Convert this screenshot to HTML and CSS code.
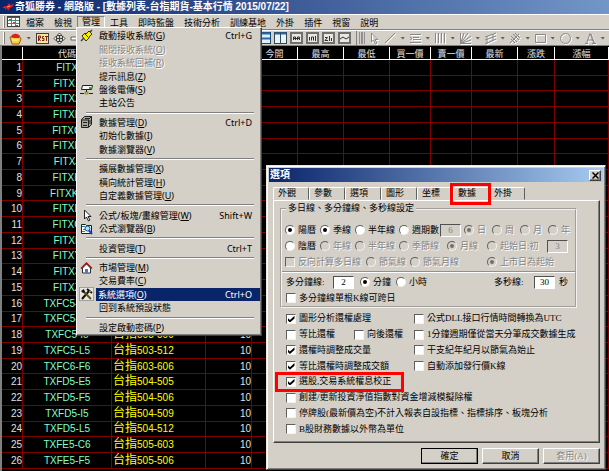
FILE: index.html
```html
<!DOCTYPE html>
<html lang="zh-Hant">
<head>
<meta charset="utf-8">
<title>奇狐勝券</title>
<link rel="stylesheet" href="styles.css">
</head>
<body>
<div class="app">
  <header class="titlebar">
    <svg class="logo" width="12" height="10" viewBox="0 0 12 10"><path d="M0 6 3 4 5 4 7 1 8 3 12 2 10 5 8 6 6 9 5 6 3 8 3 6Z" fill="#f01818"/><path d="M5 5 8 4" stroke="#ff9a80" fill="none"/></svg>
    <h1>奇狐勝券 - 網路版 - [數據列表-台指期貨-基本行情 2015/07/22]</h1>
  </header>

  <nav class="menubar">
    <span class="grip"></span>
    <svg class="doc" width="13" height="11" viewBox="0 0 13 11"><rect x=".5" y=".5" width="12" height="10" fill="#fff" stroke="#404040"/><path d="M1 1.500h11" stroke="#2858c8"/><path d="M1 4.500h11M1 7.500h11M4.500 2v8M8.500 2v8" stroke="#508878"/><path d="M2 3.500h2M6 6.500h2M9 9.500h2" stroke="#d04040"/></svg>
    <button>檔案</button><button>檢視</button>
    <div class="open">
      <button>管理</button>
      <div class="menu" role="menu">
        <button role="menuitem"><svg width="13" height="13" viewBox="0 0 13 13"><path d="M1 12l3-3M9 4l3-3" stroke="#404040" stroke-width="1.500"/><path d="M2 7l3-3 1 1 3-3 3 3-3 3 0 1-3 3Z" fill="#f8f000" stroke="#303000"/><path d="M5 5l3 3" stroke="#303000"/></svg><span>啟動接收系統(<u>G</u>)</span><kbd>Ctrl+G</kbd></button>
        <button role="menuitem" disabled><i></i><span>關閉接收系統(<u>O</u>)</span></button>
        <button role="menuitem" disabled><i></i><span>接收系統回補(<u>R</u>)</span></button>
        <button role="menuitem"><i></i><span>提示訊息(<u>Z</u>)</span></button>
        <button role="menuitem"><svg width="13" height="11" viewBox="0 0 13 11"><path d="M2.500 1.500h10l-1 4h-10z" fill="#f8f8f8" stroke="#202020"/><path d="M6.500 6v3M0 9.500h4M9 9.500h4" stroke="#202020"/><rect x="5" y="8" width="3" height="2" fill="#e0e020" stroke="#404000" stroke-width=".5"/><rect x="9" y="3" width="2" height="2" fill="#20b020"/></svg><span>盤後電傳(<u>S</u>)</span></button>
        <button role="menuitem"><i></i><span>主站公告</span></button>
        <hr>
        <button role="menuitem"><svg width="13" height="12" viewBox="0 0 13 12"><path d="M1.500 3.500l3-3h7v8l-3 3h-7z" fill="#a8a498" stroke="#202020"/><path d="M1 4h7.500v7M8.500 3.500l3-3M3 6.500h4M3 9.500h4M5 2.500h5M10 4v4" stroke="#202020" fill="none"/></svg><span>數據管理(<u>D</u>)</span><kbd>Ctrl+D</kbd></button>
        <button role="menuitem"><i></i><span>初始化數據(<u>I</u>)</span></button>
        <button role="menuitem"><i></i><span>數據瀏覽器(<u>V</u>)</span></button>
        <hr>
        <button role="menuitem"><i></i><span>擴展數據管理(<u>X</u>)</span></button>
        <button role="menuitem"><i></i><span>橫向統計管理(<u>H</u>)</span></button>
        <button role="menuitem"><i></i><span>自定義數據管理(<u>U</u>)</span></button>
        <hr>
        <button role="menuitem"><svg width="13" height="13" viewBox="0 0 13 13"><path d="M4.500 1v9l2-2 2 4 1.500-1-2-3.500h3z" fill="#fff" stroke="#202020"/></svg><span>公式/板塊/畫線管理(<u>W</u>)</span><kbd>Shift+W</kbd></button>
        <button role="menuitem"><svg width="13" height="12" viewBox="0 0 13 12"><path d="M1.500 1.500h4l1 1h5v8h-10z" fill="#fff" stroke="#202020"/><path d="M2 3.500h3M3 6.500h2M2 8.500h3" stroke="#209090"/><circle cx="7.500" cy="5.500" r="2.500" fill="#a8e8f0" stroke="#184888"/><path d="M9 7.500l3 3.500" stroke="#1838e0" stroke-width="2"/></svg><span>公式瀏覽器(<u>B</u>)</span></button>
        <hr>
        <button role="menuitem"><i></i><span>投資管理(<u>T</u>)</span><kbd>Ctrl+T</kbd></button>
        <hr>
        <button role="menuitem"><svg width="13" height="12" viewBox="0 0 13 12"><path d="M2.500 6v5h8V6l-4-4z" fill="#fff" stroke="#303030"/><path d="M1 6.500l5.500-5.500 5.500 5.500" fill="none" stroke="#a01818" stroke-width="1.500"/><rect x="5" y="7" width="3" height="4" fill="#4878d0"/></svg><span>市場管理(<u>M</u>)</span></button>
        <button role="menuitem"><i></i><span>交易費率(<u>C</u>)</span></button>
        <button role="menuitem" class="current"><svg width="13" height="12" viewBox="0 0 13 12"><path d="M2 11l7-8M7 1l5 4" stroke="#101010" stroke-width="2"/><path d="M3 3l8 8" stroke="#605010" stroke-width="2"/><path d="M1 3l3-2 1 3-2 1z" fill="#101010"/><path d="M9 3l2 1" stroke="#d0b020"/></svg><span>系統選項(<u>O</u>)</span><kbd>Ctrl+O</kbd></button>
        <button role="menuitem"><i></i><span>回到系統預設狀態</span></button>
        <hr>
        <button role="menuitem"><i></i><span>設定啟動密碼(<u>P</u>)</span></button>
      </div>
    </div>
    <button>工具</button><button>即時監盤</button><button>技術分析</button><button>訓練基地</button><button>外掛</button><button>插件</button><button>視窗</button><button>說明</button>
  </nav>

  <div class="toolbar">
    <div class="tools main">
      <span class="grip"></span>
      <svg width="13" height="13" viewBox="0 0 13 13"><path d="M1 5h10l1 2-2 5H3z" fill="#f8d040" stroke="#a06000"/><path d="M2 5c0-3 6-5 9-1l-1 2H5z" fill="#e02020"/><path d="M3 8h6" stroke="#fff8c0"/></svg>
      <span class="caret"></span>
      <svg width="13" height="11" viewBox="0 0 13 11"><rect x=".5" y=".5" width="12" height="10" fill="#f0e8a0" stroke="#404040"/><path d="M2.500 8V3h2v2h-2l2 3M8 3.500H6.500v2H8v2H6M9 3.500h3M10.500 3v5" fill="none" stroke="#802010"/></svg>
      <svg width="13" height="13" viewBox="0 0 13 13"><path d="M6.500 1L9 3.500H4zM6.500 12L9 9.500H4zM1 6.500L3.500 4v5zM12 6.500L9.500 4v5zM6.500 3v7M3 6.500h7" fill="#fff" stroke="#404040"/></svg>
      <svg width="13" height="13" viewBox="0 0 13 13"><path d="M1 5h11v3H1z" fill="#fff" stroke="#606060"/></svg>
    </div>
    <div class="tools windows">
      <svg width="13" height="12" viewBox="0 0 13 12"><rect x=".5" y=".5" width="12" height="11" fill="#e0f0f8" stroke="#184878"/><path d="M1 1.500h11M1 6.500h11" stroke="#2868a8" stroke-width="2"/></svg>
      <svg width="13" height="12" viewBox="0 0 13 12"><rect x=".5" y=".5" width="12" height="11" fill="#e8f4f8" stroke="#304858"/><path d="M1 1.500h11" stroke="#2868a8" stroke-width="2"/><path d="M6.500 1v10" stroke="#304858"/></svg>
      <svg width="13" height="12" viewBox="0 0 13 12"><rect x="1" y="1" width="11" height="10" fill="#e8e8e0" stroke="#707070" stroke-width="2"/><path d="M3.500 8V5h2v3M7.500 8V5h2v3M4 6.500h6" fill="none" stroke="#303030"/></svg>
      <svg width="13" height="12" viewBox="0 0 13 12"><rect x="1" y="1" width="11" height="10" fill="#e8e8e0" stroke="#707070" stroke-width="2"/><path d="M3.500 8.500V5M5.500 8.500V5h2v3.500M9.500 4v5" fill="none" stroke="#303030"/></svg>
      <svg width="13" height="12" viewBox="0 0 13 12"><rect x="1" y="1" width="11" height="10" fill="#e8e8e0" stroke="#707070" stroke-width="2"/><path d="M3 5.500h2.500L3 8.500h3M7.500 9V4M9.500 9V6" fill="none" stroke="#303030"/></svg>
      <svg width="13" height="12" viewBox="0 0 13 12"><rect x="1" y="1" width="11" height="10" fill="#e8e8e0" stroke="#707070" stroke-width="2"/><path d="M2 7l3-2 3 2 3-2" fill="none" stroke="#303030"/></svg>
    </div>
    <div class="tools draw">
      <span class="grip double"></span>
      <svg width="13" height="13" viewBox="0 0 13 13"><path d="M3.500 1v9l2-2 2 4 1.500-1-2-3.500h3z"/></svg>
      <svg width="13" height="13" viewBox="0 0 13 13"><path d="M1 11L11 1"/></svg><span class="caret"></span>
      <svg width="13" height="13" viewBox="0 0 13 13"><path d="M1 2.500h11M1 10.500h11M4 5.500h6M4 7.500h8M1 5l2 1.500L1 8"/></svg><span class="caret"></span>
      <svg width="13" height="13" viewBox="0 0 13 13"><path d="M1.500 1v10M4.500 1v10M7.500 1v10M10.500 1v10"/></svg><span class="caret"></span>
      <svg width="13" height="13" viewBox="0 0 13 13"><path d="M1.500 1v10.500H12M1.500 11.500L5 1M1.500 11.500L9 1M1.500 11.500L12 4M1.500 11.500L12 8"/></svg><span class="caret"></span>
      <svg width="13" height="13" viewBox="0 0 13 13"><path d="M1 5l11-4M1 8l11-4M1 12l11-5M3 4v8M9 2v7"/></svg><span class="caret"></span>
      <svg width="13" height="13" viewBox="0 0 13 13"><path d="M1 11l9-9M2 4l6 6M4 2l6 6M6 1l5 5M2 7l4 4"/></svg><span class="caret"></span>
      <svg width="13" height="13" viewBox="0 0 13 13"><path d="M1.500 2.500h10v8h-10z"/></svg><span class="caret"></span>
      <svg width="13" height="13" viewBox="0 0 13 13"><circle cx="6.500" cy="6.500" r="5"/></svg><span class="caret"></span>
      <svg width="13" height="13" viewBox="0 0 13 13"><path d="M2.500 11.500L6 1.500 10 11.500M4 8h5M1 11.500h3M8 11.500h4M7 2l3.500 9"/></svg><span class="caret"></span>
      <svg width="13" height="13" viewBox="0 0 13 13"><path d="M1.500 1.500h9v9h-9zM4 4l4 4M4 8l4-4"/></svg>
    </div>
  </div>

  <main class="quotes">
    <table>
      <colgroup><col class="c-no"><col class="c-code"><col class="c-name"><col class="c-m"><col class="c-m"><col class="c-m"><col class="c-m"><col class="c-s"><col class="c-s"><col class="c-m"><col class="c-xs"><col></colgroup>
      <thead><tr><th></th><th>代碼</th><th></th><th></th><th>今開</th><th>最高</th><th>最低</th><th>買一價</th><th>賣一價</th><th>最新</th><th>漲跌</th><th>漲幅</th></tr></thead>
      <tbody>
        <tr><td>1</td><td>FITX</td><td></td><td></td><td></td><td></td><td></td><td></td><td></td><td></td><td></td><td></td></tr>
        <tr><td>2</td><td>FITX1</td><td></td><td></td><td></td><td></td><td></td><td></td><td></td><td></td><td></td><td></td></tr>
        <tr><td>3</td><td>FITX2</td><td></td><td></td><td></td><td></td><td></td><td></td><td></td><td></td><td></td><td></td></tr>
        <tr><td>4</td><td>FITXF</td><td></td><td></td><td></td><td></td><td></td><td></td><td></td><td></td><td></td><td></td></tr>
        <tr><td>5</td><td>FITXG</td><td></td><td></td><td></td><td></td><td></td><td></td><td></td><td></td><td></td><td></td></tr>
        <tr><td>6</td><td>FITXE</td><td></td><td></td><td></td><td></td><td></td><td></td><td></td><td></td><td></td><td></td></tr>
        <tr><td>7</td><td>FITXJ</td><td></td><td></td><td></td><td></td><td></td><td></td><td></td><td></td><td></td><td></td></tr>
        <tr><td>8</td><td>FITXH</td><td></td><td></td><td></td><td></td><td></td><td></td><td></td><td></td><td></td><td></td></tr>
        <tr><td>9</td><td>FITXK1</td><td></td><td></td><td></td><td></td><td></td><td></td><td></td><td></td><td></td><td></td></tr>
        <tr><td>10</td><td>FITXB</td><td></td><td></td><td></td><td></td><td></td><td></td><td></td><td></td><td></td><td></td></tr>
        <tr><td>11</td><td>FITXC</td><td></td><td></td><td></td><td></td><td></td><td></td><td></td><td></td><td></td><td></td></tr>
        <tr><td>12</td><td>FITXL</td><td></td><td></td><td></td><td></td><td></td><td></td><td></td><td></td><td></td><td></td></tr>
        <tr><td>13</td><td>FITXY</td><td></td><td></td><td></td><td></td><td></td><td></td><td></td><td></td><td></td><td></td></tr>
        <tr><td>14</td><td>FITX3</td><td></td><td></td><td></td><td></td><td></td><td></td><td></td><td></td><td></td><td></td></tr>
        <tr><td>15</td><td>FITXZ</td><td></td><td></td><td></td><td></td><td></td><td></td><td></td><td></td><td></td><td></td></tr>
        <tr><td>16</td><td>TXFC5-E5</td><td></td><td></td><td></td><td></td><td></td><td></td><td></td><td></td><td></td><td></td></tr>
        <tr><td>17</td><td>TXFC5-F5</td><td></td><td></td><td></td><td></td><td></td><td></td><td></td><td></td><td></td><td></td></tr>
        <tr><td>18</td><td>TXFC5-I5</td><td>台指<span>503-509</span></td><td>10</td><td></td><td></td><td></td><td></td><td></td><td></td><td></td><td></td></tr>
        <tr><td>19</td><td>TXFC5-L5</td><td>台指<span>503-512</span></td><td>10</td><td></td><td></td><td></td><td></td><td></td><td></td><td></td><td></td></tr>
        <tr><td>20</td><td>TXFC6-F6</td><td>台指<span>603-606</span></td><td>10</td><td></td><td></td><td></td><td></td><td></td><td></td><td></td><td></td></tr>
        <tr><td>21</td><td>TXFD5-E5</td><td>台指<span>504-505</span></td><td>10</td><td></td><td></td><td></td><td></td><td></td><td></td><td></td><td></td></tr>
        <tr><td>22</td><td>TXFD5-F5</td><td>台指<span>504-506</span></td><td>10</td><td></td><td></td><td></td><td></td><td></td><td></td><td></td><td></td></tr>
        <tr><td>23</td><td>TXFD5-I5</td><td>台指<span>504-509</span></td><td>10</td><td></td><td></td><td></td><td></td><td></td><td></td><td></td><td></td></tr>
        <tr><td>24</td><td>TXFD5-L5</td><td>台指<span>504-512</span></td><td>10</td><td></td><td></td><td></td><td></td><td></td><td></td><td></td><td></td></tr>
        <tr><td>25</td><td>TXFE5-C6</td><td>台指<span>505-603</span></td><td>10</td><td></td><td></td><td></td><td></td><td></td><td></td><td></td><td></td></tr>
        <tr><td>26</td><td>TXFE5-F5</td><td>台指<span>505-506</span></td><td>10</td><td></td><td></td><td></td><td></td><td></td><td></td><td></td><td></td></tr>
      </tbody>
    </table>
  </main>

  <section class="dialog" role="dialog" aria-labelledby="dlg-title">
    <header class="dialog-title">
      <h2 id="dlg-title">選項</h2>
      <button class="close" aria-label="關閉"><svg width="7" height="7" viewBox="0 0 7 7"><path d="M.5.5l6 6M6.500.5l-6 6" stroke="#000" stroke-width="1.500"/></svg></button>
    </header>
    <div class="tabs" role="tablist">
      <button role="tab">外觀</button><button role="tab">參數</button><button role="tab">選項</button><button role="tab">圖形</button><button role="tab">坐標</button><button role="tab" class="selected" aria-selected="true">數據</button><button role="tab">外掛</button>
    </div>
    <div class="panel">
      <fieldset>
        <legend>多日線、多分鐘線、多秒線設定</legend>
        <div class="row days">
          <label><input type="radio" name="cal" checked>陽曆</label>
          <label><input type="radio" name="sun" checked>季線</label>
          <label><input type="radio" name="half">半年線</label>
          <label><input type="radio" name="half">週期數</label>
          <input type="text" value="6" aria-label="週期數" disabled>
          <label class="off"><input type="radio" name="unit" checked disabled>日</label>
          <label class="off"><input type="radio" name="unit" disabled>周</label>
          <label class="off"><input type="radio" name="unit" disabled>月</label>
          <label class="off"><input type="radio" name="unit" disabled>年</label>
        </div>
        <div class="row moon">
          <label><input type="radio" name="cal">陰曆</label>
          <label class="off"><input type="radio" name="lunar" disabled>年線</label>
          <label class="off"><input type="radio" name="lunar" disabled>半年線</label>
          <label class="off"><input type="radio" name="lunar" disabled>季節線</label>
          <label class="off"><input type="radio" name="lunar" checked disabled>月線</label>
          <label class="off"><input type="radio" name="start" disabled>起始日:初</label>
          <input type="text" value="3" aria-label="起始日" disabled>
        </div>
        <div class="row terms">
          <label class="off"><input type="checkbox" disabled>反向計算多日線</label>
          <label class="off"><input type="radio" name="lunar" disabled>節氣線</label>
          <label class="off"><input type="radio" name="lunar" disabled>節氣月線</label>
          <label class="off"><input type="radio" name="start" checked disabled>上市日為起始</label>
        </div>
        <hr>
        <div class="row minutes">
          <label for="mins">多分鐘線:</label>
          <input type="text" id="mins" value="2">
          <label><input type="radio" name="min" checked>分鐘</label>
          <label><input type="radio" name="min">小時</label>
          <label for="secs">多秒線:</label>
          <input type="text" id="secs" value="30">
          <span>秒</span>
        </div>
        <div class="row single"><label><input type="checkbox">多分鐘線單根K線可跨日</label></div>
      </fieldset>
      <div class="options">
        <label><input type="checkbox" checked>圖形分析還權處理</label>
        <label class="right"><input type="checkbox">公式DLL接口行情時間轉換為UTC</label>
        <label class="half"><input type="checkbox">等比還權</label>
        <label class="half"><input type="checkbox">向後還權</label>
        <label class="right"><input type="checkbox">1分鐘週期僅從當天分筆成交數據生成</label>
        <label><input type="checkbox" checked>還權時調整成交量</label>
        <label class="right"><input type="checkbox">干支紀年紀月以節氣為始止</label>
        <label><input type="checkbox" checked>等比還權時調整成交額</label>
        <label class="right"><input type="checkbox">自動添加發行價K線</label>
        <label class="marked"><input type="checkbox" checked>選股,交易系統權息校正</label>
        <label class="wide"><input type="checkbox">創建/更新投資淨值指數對資金增減模擬除權</label>
        <label class="wide"><input type="checkbox">停牌股(最新價為空)不計入報表自設指標、指標排序、板塊分析</label>
        <label class="wide"><input type="checkbox">B股財務數據以外幣為單位</label>
      </div>
    </div>
    <footer class="actions">
      <button class="default">確定</button><button>取消</button><button disabled>套用(A)</button>
    </footer>
  </section>
</div>
</body>
</html>
```
FILE: styles.css
```css
* { box-sizing: border-box; }

body {
  margin: 0;
  background: #d4d0c8;
  color: #000;
  font: 9px/11px "Noto Sans", "Noto Sans CJK TC", sans-serif;
}

button, input {
  font: inherit;
  color: inherit;
  margin: 0;
  padding: 0;
}

button { border: 0; background: none; white-space: nowrap; }

.app {
  position: relative;
  display: flex;
  flex-direction: column;
  height: 100vh;
  overflow: hidden;
}

.titlebar {
  display: flex;
  align-items: center;
  gap: 1px;
  height: 14px;
  padding-left: 2px;
  background: linear-gradient(90deg, #0a246a, #7396c8);
}

h1, h2 {
  margin: 0;
  color: #fff;
  font: bold 10px/12px "Liberation Sans", "Noto Sans CJK TC", sans-serif;
  white-space: nowrap;
}

/* Menu bar */
.menubar {
  display: flex;
  height: 16px;
  padding: 1px 0 0 3px;
  border-top: 1px solid #fff;
  border-bottom: 1px solid #808080;
}

.menubar > button, .open > button { height: 12px; padding: 0 5px; }
.menubar .doc { margin: 0 1px 0 2px; }

.grip {
  flex: none;
  width: 2px;
  height: 12px;
  border-left: 1px solid #fff;
  border-right: 1px solid #808080;
}
.grip.double { width: 6px; border-style: double; border-width: 0 3px; border-color: #909090; }

.open { position: relative; }
.open > button {
  border: 1px solid;
  border-color: #808080 #fff #fff #808080;
  padding: 0 4px;
  line-height: 10px;
}

.menu {
  position: absolute;
  z-index: 2;
  top: 11px;
  left: -1px;
  display: flex;
  flex-direction: column;
  width: 186px;
  height: 309px;
  padding: 1px;
  background: #d4d0c8;
  border: 1px solid;
  border-color: #fff #404040 #404040 #fff;
  box-shadow: inset -1px -1px #808080;
}

.menu button {
  flex: 1;
  display: flex;
  align-items: center;
  min-height: 0;
  line-height: 13px;
  text-align: left;
}
.menu svg, .menu i { flex: none; width: 13px; margin: 0 4px 0 2px; }
.menu span { flex: 1; padding-left: 2px; }
.menu kbd { font: inherit; text-align: right; padding-right: 8px; }
.menu button:disabled, .off { color: #858585; text-shadow: 1px 1px #fff; }
.menu hr {
  width: 168px;
  height: 2px;
  margin: 2px 0 2px 8px;
  border: 0;
  border-top: 1px solid #808080;
  border-bottom: 1px solid #fff;
}
.current { color: #fff; }
.current span, .current kbd { align-self: stretch; background: #0a246a; }
.menu .current svg { margin: 0 3px 0 2px; outline: 1px solid #a0a0a0; background: #e8e6e0; }

/* Toolbar */
.toolbar {
  display: flex;
  height: 16px;
  border-top: 1px solid #fff;
  border-bottom: 1px solid #808080;
  overflow: hidden;
}
.tools { display: flex; flex: none; align-items: center; }
.tools svg { flex: none; }
.main { gap: 4px; width: 258px; padding-left: 3px; }
.windows { gap: 3px; width: 99px; border-right: 1px solid #808080; }
.draw { gap: 3px; padding-left: 2px; }
.draw svg { fill: none; stroke: #888; filter: drop-shadow(1px 1px #fff); }
.caret {
  flex: none;
  width: 6px;
  height: 3px;
  background: #606060;
  clip-path: polygon(0 0, 5px 0, 50% 100%);
}

/* Quote grid */
.quotes {
  flex: 1;
  min-height: 0;
  padding: 1px 0 2px;
  border-left: 2px solid #808080;
  background: #000;
}
table {
  width: 100%;
  height: 100%;
  table-layout: fixed;
  border-spacing: 0;
  color: #e0e0e0;
}
.c-no { width: 21px; }
.c-code { width: 89px; }
.c-name { width: 94px; }
.c-m { width: 46px; }
.c-s { width: 41px; }
.c-xs { width: 37px; }
th {
  height: 13px;
  padding: 1px 0 0;
  font-weight: 400;
  line-height: 10px;
  border-right: 1px solid #fff;
  border-bottom: 1px solid #fff;
}
td {
  height: 15px;
  padding: 0;
  font: 10px/11px "Liberation Sans", "Noto Sans CJK TC", sans-serif;
  border-right: 1px solid #800000;
  border-bottom: 1px solid #800000;
}
td:nth-child(1), td:nth-child(4) { text-align: right; }
td:nth-child(2) { text-align: center; color: #80ffc8; }
td:nth-child(3) { padding-left: 1px; color: #ff0; font-size: 12px; }
td span { font-size: 10px; }

/* Options dialog */
.dialog {
  position: absolute;
  z-index: 3;
  top: 165px;
  left: 266px;
  width: 340px;
  padding: 2px;
  background: #d4d0c8;
  border: 1px solid;
  border-color: #e8e6e0 #404040 #404040 #e8e6e0;
  box-shadow: inset 1px 1px #fff, inset -1px -1px #808080;
  font-family: "Liberation Serif", "Noto Sans CJK TC", serif;
}
.dialog-title {
  display: flex;
  align-items: center;
  justify-content: space-between;
  height: 14px;
  padding: 0 2px 0 1px;
  background: linear-gradient(90deg, #0a246a, #a6caf0);
}
.close {
  display: grid;
  place-items: center;
  width: 12px;
  height: 11px;
}
.close, .actions button {
  background: #d4d0c8;
  border: 1px solid;
  border-color: #fff #404040 #404040 #fff;
  box-shadow: inset -1px -1px #808080;
}
.tabs { display: flex; padding: 5px 4px 0; }
.tabs button {
  width: 36px;
  height: 13px;
  padding-left: 4px;
  text-align: left;
  border: 1px solid;
  border-color: #fff #606060 transparent #fff;
  border-radius: 2px 2px 0 0;
}
.tabs .selected {
  position: relative;
  padding-bottom: 2px;
  background: #d4d0c8;
  border-bottom: 0;
}
.tabs .selected::after, .marked::after {
  content: "";
  position: absolute;
  border: 3px solid #f00;
}
.tabs .selected::after { inset: -5px -3px -5px -4px; }

.panel {
  margin: 0 3px 0 4px;
  padding: 2px 6px 5px;
  border: 1px solid;
  border-color: #fff #404040 #404040 #fff;
  box-shadow: inset -1px -1px #808080;
}
fieldset {
  margin: 0 16px 0 0;
  padding: 8px 0 0 3px;
  min-width: 0;
  border: 2px groove #f4f2ec;
}
legend { margin-left: 1px; padding: 0 2px; }
fieldset hr {
  height: 2px;
  margin: 1px 0 1px -3px;
  border: 0;
  border-top: 1px solid #909090;
  border-bottom: 1px solid #fff;
}
.row { display: grid; align-items: center; height: 16px; white-space: nowrap; }
.days { grid-template-columns: 35px 35px 44px 41px 24px 28px 28px 28px 24px; }
.moon { grid-template-columns: 35px 35px 44px 48px 40px 60px 22px; }
.terms { grid-template-columns: 81px 44px 77px 80px; }
.minutes { grid-template-columns: 47px 27px 36px 98px 40px 25px 12px; }
.minutes, .single { padding-left: 1px; }

.dialog label { display: flex; align-items: center; gap: 3px; white-space: nowrap; }

input[type="radio"], input[type="checkbox"] {
  appearance: none;
  flex: none;
  display: grid;
  place-items: center;
  width: 10px;
  height: 10px;
  background: #fff;
  border: 1px solid;
  border-color: #606060 #f4f2ec #f4f2ec #606060;
}
input[type="radio"] { border-radius: 50%; }
input[type="radio"]:checked::before {
  content: "";
  width: 4px;
  height: 4px;
  border-radius: 50%;
  background: #000;
}
input[type="checkbox"]:checked::before {
  content: "";
  width: 7px;
  height: 7px;
  background: #000;
  clip-path: polygon(0 35%, 35% 65%, 100% 5%, 100% 45%, 35% 100%, 0 70%);
}
input[type]:disabled { background: #d4d0c8; }
input[type="radio"]:disabled::before { background: #707070; }

input[type="text"] {
  width: 21px;
  height: 13px;
  text-align: center;
  background: #fff;
  border: 1px solid;
  border-color: #505050 #fff #fff #505050;
}
input[type="text"]:disabled { color: #808080; }

.options {
  display: grid;
  grid-template-columns: 68px 60px 1fr;
  grid-auto-rows: 1fr;
  height: 126px;
  margin-top: 3px;
  padding-left: 6px;
}
.options label { grid-column: 1 / 3; }
.options .right { grid-column: 3; }
.options .half { grid-column: auto; }
.options .wide { grid-column: 1 / -1; }
.marked { position: relative; }
.marked::after { inset: -2px 10px -2px -11px; }

.actions { display: flex; justify-content: flex-end; gap: 4px; padding: 5px 3px 3px; }
.actions button { width: 57px; height: 16px; }
.actions .default { outline: 1px solid #000; outline-offset: -1px; }
.actions button:disabled { color: #858585; text-shadow: 1px 1px #fff; }
```
